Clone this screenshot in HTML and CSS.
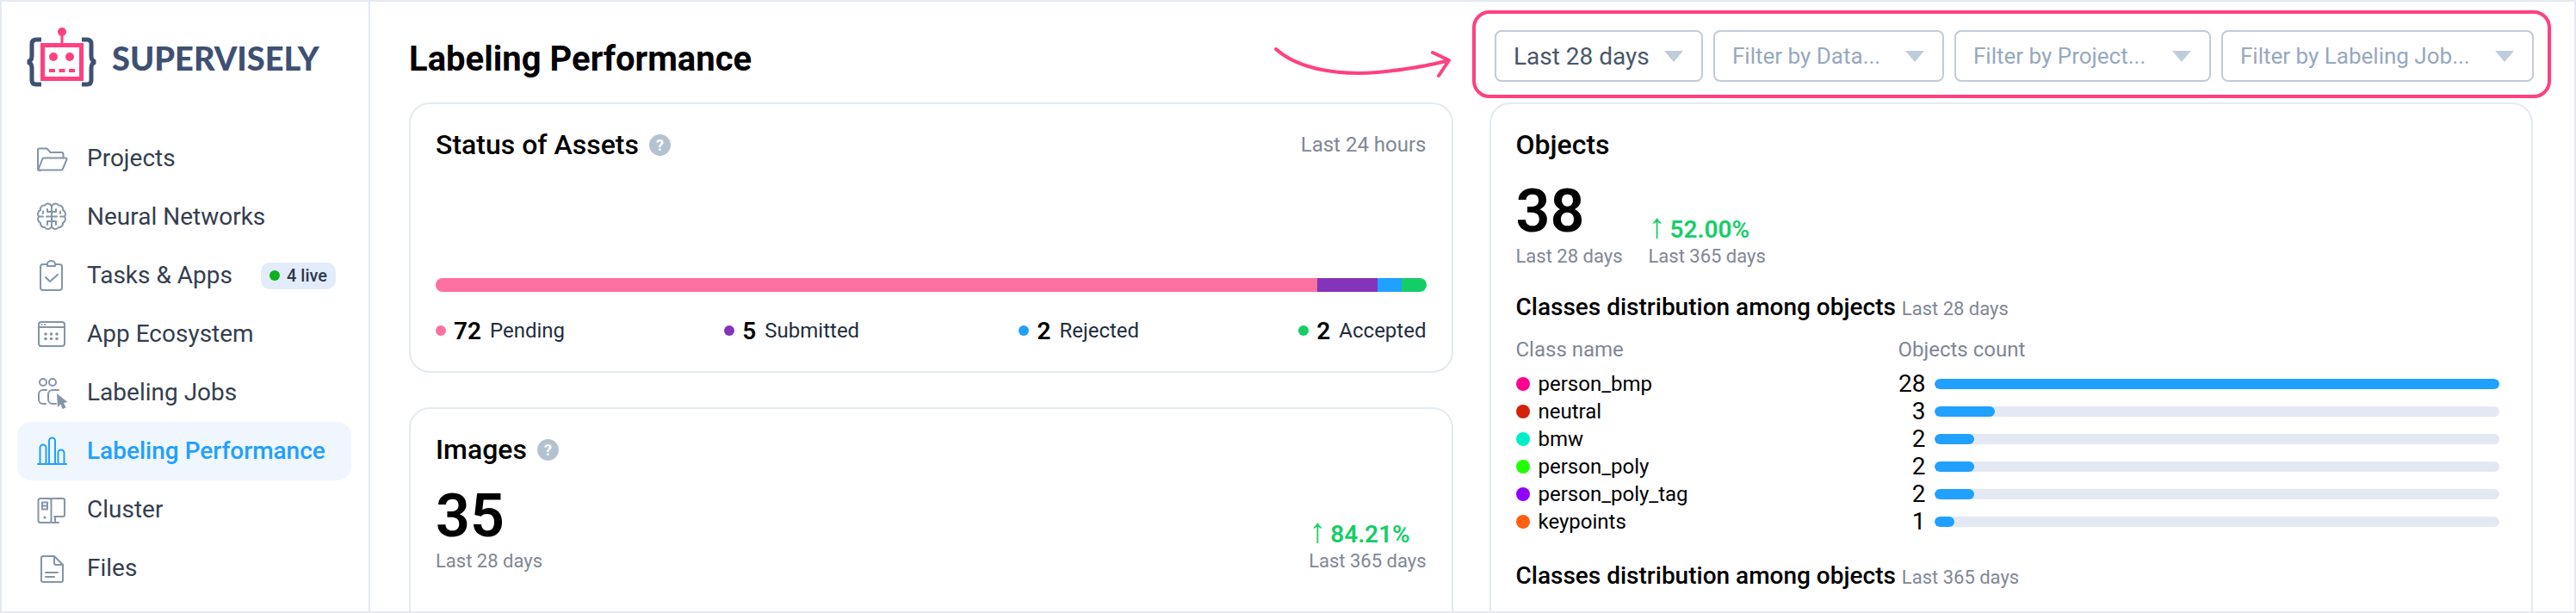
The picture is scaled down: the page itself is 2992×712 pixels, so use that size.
FILE: index.html

```html
<!DOCTYPE html>
<html lang="en">
<head>
<meta charset="UTF-8">
<meta name="viewport" content="width=device-width, initial-scale=1.0">
<title>Labeling Performance</title>
<link rel="stylesheet" href="styles.css">
</head>
<body>
<div class="app">

<aside class="sidebar">
<div class="logo">
<svg class="logo-mark" viewBox="29 28 86 74" width="86" height="74">
<g fill="none" stroke="#3f5073" stroke-width="5">
<path d="M48 44 h-6 q-5 0 -5 5 v14 q0 6 -5 7 q5 1 5 7 v14 q0 5 5 5 h6"/>
<path d="M95 44 h6 q5 0 5 5 v14 q0 6 5 7 q-5 1 -5 7 v14 q0 5 -5 5 h-6"/>
</g>
<g fill="none" stroke="#ff4081">
<rect x="49.5" y="50.5" width="45" height="39" stroke-width="5"/>
<path d="M72 38 V49" stroke-width="3"/>
<path d="M57 80 H87" stroke-width="4" stroke-dasharray="7 4.5"/>
</g>
<g fill="#ff4081">
<circle cx="72" cy="35" r="5"/>
<circle cx="62" cy="64" r="5"/>
<circle cx="81" cy="64" r="5"/>
</g>
</svg>
<span class="logo-text">SUPERVISELY</span>
</div>

<nav class="nav">
<a class="nav-item">
<svg class="nav-icon" viewBox="0 0 36 36"><path d="M4 32 H3 a2 2 0 0 1-2-2 V8 a1.5 1.5 0 0 1 1.5-1.5 h9 l4 4.5 h13 a2 2 0 0 1 2 2 v4.5"/><path d="M1.5 31 L6 19 a2 2 0 0 1 2-1.5 H33 a1.5 1.5 0 0 1 1.4 2 L30 30 a2 2 0 0 1-2 1.5 H3"/></svg>
Projects
</a>
<a class="nav-item">
<svg class="nav-icon" viewBox="0 0 36 36"><path d="M17 6 A4.5 4.5 0 0 0 9 4.5 A4.5 4.5 0 0 0 4 10 A5 5 0 0 0 2 17.5 A5 5 0 0 0 4 25 A4.5 4.5 0 0 0 9 30 A4.5 4.5 0 0 0 17 29 Z"/><path d="M17 6 A4.5 4.5 0 0 1 25 4.5 A4.5 4.5 0 0 1 30 10 A5 5 0 0 1 32 17.5 A5 5 0 0 1 30 25 A4.5 4.5 0 0 1 25 30 A4.5 4.5 0 0 1 17 29"/><path d="M17 12 H12 V9 M2.5 17.5 H7 M17 17.5 H11 M17 23 H12 V27 M7 11.5 V14 M22 12 V9 M17 12 H22 M31.5 17.5 H27 M17 17.5 H23 M17 23 H22 V27 M27 11.5 V14"/></svg>
Neural Networks
</a>
<a class="nav-item">
<svg class="nav-icon" viewBox="0 0 36 36"><path d="M12 5 H7 a3 3 0 0 0-3 3 V32 a3 3 0 0 0 3 3 H26 a3 3 0 0 0 3-3 V8 a3 3 0 0 0-3-3 H21"/><path d="M12 7 V4.5 a4.5 3.5 0 0 1 9 0 V7 Z"/><path d="M10 20 l5 5 l9 -8"/></svg>
Tasks &amp; Apps
<span class="live-badge"><i class="live-dot"></i>4 live</span>
</a>
<a class="nav-item">
<svg class="nav-icon" viewBox="0 0 36 36"><rect x="2" y="4" width="30" height="28" rx="3"/><path d="M2 10 H32"/><g class="icon-solid"><circle cx="5.5" cy="7" r="1"/><circle cx="9" cy="7" r="1"/><circle cx="10" cy="18" r="1.8"/><circle cx="16.5" cy="18" r="1.8"/><circle cx="23" cy="18" r="1.8"/><circle cx="10" cy="23.5" r="1.8"/><circle cx="16.5" cy="23.5" r="1.8"/><circle cx="23" cy="23.5" r="1.8"/></g></svg>
App Ecosystem
</a>
<a class="nav-item">
<svg class="nav-icon" viewBox="0 0 36 36"><circle cx="7" cy="6" r="4"/><circle cx="18" cy="6" r="4"/><path d="M11 15 H7 a5 5 0 0 0-5 5 v6 a5 5 0 0 0 5 5 h3"/><path d="M25 15 H18 a5 5 0 0 0-5 5 v6 a5 5 0 0 0 5 5 h4"/><path class="icon-solid" d="M23 19 L35.5 29 L31 30 L33.5 35.5 L29.5 37 L27.5 31.5 L24 35 Z"/></svg>
Labeling Jobs
</a>
<a class="nav-item nav-item-active">
<svg class="nav-icon" viewBox="0 0 36 36"><path d="M1 33 H34 M3.5 33 V14 a3.5 3.5 0 0 1 7 0 V33 M14 33 V6 a3.5 3.5 0 0 1 7 0 V33 M24.5 33 V20 a3.5 3.5 0 0 1 7 0 V33"/></svg>
Labeling Performance
</a>
<a class="nav-item">
<svg class="nav-icon" viewBox="0 0 36 36"><rect x="1.5" y="5" width="15" height="28" rx="2.5"/><rect x="6" y="9.5" width="6" height="8"/><path d="M6 13.5 H12"/><circle class="icon-solid" cx="9" cy="27" r="1.6"/><path d="M16.5 5 H30 a2 2 0 0 1 2 2 V24 a2 2 0 0 1-2 2 H20 M21 26 V33 M17 33 H25"/></svg>
Cluster
</a>
<a class="nav-item">
<svg class="nav-icon" viewBox="0 0 36 36"><path d="M7 4 H20 L30 14 V32 a2 2 0 0 1-2 2 H7 a2 2 0 0 1-2-2 V6 a2 2 0 0 1 2-2 Z"/><path d="M20 4 V12 a2 2 0 0 0 2 2 H30"/><path d="M10 23 H24 M10 28 H20"/></svg>
Files
</a>
</nav>
</aside>

<main class="main">
<header class="page-head">
<h1 class="page-title">Labeling Performance</h1>
<svg class="callout-arrow" viewBox="0 0 204 34" width="204" height="34">
<path d="M1 2 C25 24 70 33 119 29 C150 26 180 21 202 15 M183 6 L202 15 L190 33"/>
</svg>
<div class="filters">
<div class="select select-range">Last 28 days<i class="caret"></i></div>
<div class="select select-data placeholder">Filter by Data...<i class="caret"></i></div>
<div class="select select-project placeholder">Filter by Project...<i class="caret"></i></div>
<div class="select select-job placeholder">Filter by Labeling Job...<i class="caret"></i></div>
</div>
</header>

<div class="columns">
<div class="column">
<section class="card card-status">
<div class="card-head">
<h2 class="card-title">Status of Assets <span class="help">?</span></h2>
<span class="muted">Last 24 hours</span>
</div>
<div class="status-bar">
<div class="seg seg-pending"></div>
<div class="seg seg-submitted"></div>
<div class="seg seg-rejected"></div>
<div class="seg seg-accepted"></div>
</div>
<div class="legend">
<div class="legend-item"><i class="dot dot-pending"></i><b>72</b>Pending</div>
<div class="legend-item"><i class="dot dot-submitted"></i><b>5</b>Submitted</div>
<div class="legend-item"><i class="dot dot-rejected"></i><b>2</b>Rejected</div>
<div class="legend-item"><i class="dot dot-accepted"></i><b>2</b>Accepted</div>
</div>
</section>

<section class="card card-images">
<h2 class="card-title">Images <span class="help">?</span></h2>
<div class="stats stats-spread">
<div>
<div class="big-number">35</div>
<div class="stat-sub">Last 28 days</div>
</div>
<div>
<div class="delta"><span class="delta-arrow">↑</span>84.21%</div>
<div class="stat-sub">Last 365 days</div>
</div>
</div>
</section>
</div>

<div class="column">
<section class="card card-objects">
<h2 class="card-title">Objects</h2>
<div class="stats">
<div>
<div class="big-number">38</div>
<div class="stat-sub">Last 28 days</div>
</div>
<div>
<div class="delta"><span class="delta-arrow">↑</span>52.00%</div>
<div class="stat-sub">Last 365 days</div>
</div>
</div>

<h3 class="dist-title">Classes distribution among objects <span class="dist-range">Last 28 days</span></h3>
<div class="dist-head">
<span>Class name</span>
<span>Objects count</span>
</div>
<div class="dist-rows">
<div class="dist-row"><span class="class-name"><i class="class-dot" style="background:#ff0090"></i>person_bmp</span><span class="count">28</span><div class="track"><div class="fill" style="width:100%"></div></div></div>
<div class="dist-row"><span class="class-name"><i class="class-dot" style="background:#d4210a"></i>neutral</span><span class="count">3</span><div class="track"><div class="fill" style="width:10.7%"></div></div></div>
<div class="dist-row"><span class="class-name"><i class="class-dot" style="background:#00efc8"></i>bmw</span><span class="count">2</span><div class="track"><div class="fill" style="width:7.14%"></div></div></div>
<div class="dist-row"><span class="class-name"><i class="class-dot" style="background:#22ff00"></i>person_poly</span><span class="count">2</span><div class="track"><div class="fill" style="width:7.14%"></div></div></div>
<div class="dist-row"><span class="class-name"><i class="class-dot" style="background:#9000ff"></i>person_poly_tag</span><span class="count">2</span><div class="track"><div class="fill" style="width:7.14%"></div></div></div>
<div class="dist-row"><span class="class-name"><i class="class-dot" style="background:#ff6010"></i>keypoints</span><span class="count">1</span><div class="track"><div class="fill" style="width:3.57%"></div></div></div>
</div>

<h3 class="dist-title dist-title-next">Classes distribution among objects <span class="dist-range">Last 365 days</span></h3>
</section>
</div>
</div>
</main>

</div>
</body>
</html>
```

FILE: styles.css

```css
* {
box-sizing: border-box;
}

body {
margin: 0;
font-family: Roboto, "Liberation Sans", sans-serif;
color: #000;
background: #fff;
}

h1, h2, h3 {
margin: 0;
}

.app {
display: flex;
height: 100vh;
border: 2px solid #e4eaef;
overflow: hidden;
}

/* sidebar */
.sidebar {
width: 428px;
flex: none;
padding: 28px 20px 0 18px;
border-right: 2px solid #e4eaef;
}

.logo {
display: flex;
align-items: center;
height: 74px;
margin-left: 9px;
margin-bottom: 46px;
}

.logo-mark {
flex: none;
}

.logo-text {
margin-left: 15px;
font-family: Lato, sans-serif;
font-weight: 900;
font-size: 38px;
color: #3f5073;
}

.nav-item {
display: flex;
align-items: center;
height: 68px;
padding-left: 23px;
padding-bottom: 2px;
border-radius: 16px;
font-size: 28px;
color: #343e4f;
}

.nav-icon {
width: 36px;
height: 36px;
margin-top: 2px;
margin-right: 22px;
flex: none;
overflow: visible;
fill: none;
stroke: #8595a8;
stroke-width: 2;
stroke-linecap: round;
stroke-linejoin: round;
}

.icon-solid {
fill: #8595a8;
stroke: none;
}

.nav-item-active {
background: #f0f6fe;
color: #20a0ff;
font-weight: 500;
}

.nav-item-active .nav-icon {
stroke: #20a0ff;
}

.live-badge {
display: flex;
align-items: center;
height: 31px;
margin-top: 2px;
margin-left: 33px;
padding: 0 10px;
border-radius: 10px;
background: #e3ecfb;
font-size: 20px;
font-weight: 500;
color: #2b3a4a;
}

.live-dot {
width: 12px;
height: 12px;
margin-right: 8px;
border-radius: 50%;
background: #0cb01e;
}

/* main */
.main {
flex: 1;
min-width: 0;
padding: 10px 48px 0 45px;
}

.page-head {
display: flex;
align-items: center;
height: 102px;
margin-bottom: 5px;
}

.page-title {
margin-top: 10px;
font-size: 40px;
font-weight: 700;
}

.callout-arrow {
margin-left: auto;
margin-right: 25px;
margin-top: 18px;
flex: none;
overflow: visible;
fill: none;
stroke: #ff4081;
stroke-width: 4;
stroke-linecap: round;
stroke-linejoin: round;
}

.filters {
display: flex;
gap: 12px;
flex: none;
height: 102px;
margin-right: -21px;
padding: 19px 16px 15px 22px;
border: 4px solid #ff4081;
border-radius: 20px;
}

.select {
display: flex;
align-items: center;
justify-content: space-between;
height: 60px;
padding: 0 21px 0 20px;
border: 2px solid #c0ccda;
border-radius: 8px;
font-size: 28px;
color: #48576a;
white-space: nowrap;
}

.select-range { width: 242px; }
.select-data { width: 268px; }
.select-project { width: 298px; }
.select-job { width: 363px; }

.placeholder {
font-size: 26px;
color: #97a8be;
}

.caret {
width: 0;
height: 0;
border-left: 11px solid transparent;
border-right: 11px solid transparent;
border-top: 13px solid #c0ccda;
}

.columns {
display: flex;
gap: 42px;
}

.column {
flex: 1;
min-width: 0;
}

.card {
padding: 29px 29px 60px;
border: 2px solid #e4eaef;
border-radius: 24px;
}

.card-status {
height: 314px;
margin-bottom: 40px;
}

.card-images {
height: 320px;
}

.card-head {
display: flex;
justify-content: space-between;
align-items: center;
}

.card-title {
display: flex;
align-items: center;
height: 36px;
font-size: 32px;
font-weight: 500;
}

.help {
display: flex;
align-items: center;
justify-content: center;
width: 25px;
height: 25px;
margin-left: 12px;
border-radius: 50%;
background: #b4c2d0;
color: #fff;
font-size: 18px;
font-weight: 700;
}

.muted {
font-size: 24px;
font-weight: 400;
color: #7f8795;
}

.status-bar {
display: flex;
height: 16px;
margin-top: 137px;
border-radius: 8px;
overflow: hidden;
}

.seg-pending { width: 1024px; background: #fe6fa1; }
.seg-submitted { width: 70px; background: #8434b8; }
.seg-rejected { width: 28px; background: #20a0ff; }
.seg-accepted { flex: 1; background: #13ce66; }

.legend {
display: flex;
justify-content: space-between;
margin-top: 29px;
}

.legend-item {
display: flex;
align-items: center;
height: 32px;
font-size: 24px;
color: #1f2d3d;
}

.legend-item b {
margin-right: 10px;
font-size: 28px;
font-weight: 600;
color: #000;
}

.dot {
width: 12px;
height: 12px;
margin-right: 9px;
border-radius: 50%;
}

.dot-pending { background: #fe6fa1; }
.dot-submitted { background: #8434b8; }
.dot-rejected { background: #20a0ff; }
.dot-accepted { background: #13ce66; }

.stats {
display: flex;
align-items: flex-end;
gap: 30px;
margin-top: 24px;
}

.stats-spread {
justify-content: space-between;
}

.big-number {
font-size: 70px;
font-weight: 600;
line-height: 70px;
}

.stat-sub {
height: 32px;
margin-top: 2px;
font-size: 22px;
line-height: 32px;
color: #7f8795;
}

.delta {
font-size: 28px;
font-weight: 600;
line-height: 26px;
color: #13ce66;
}

.delta-arrow {
margin-right: 5px;
font-family: "Liberation Sans", sans-serif;
font-size: 40px;
font-weight: 400;
line-height: 0;
}

/* classes distribution */
.dist-title {
height: 34px;
margin-top: 26px;
font-size: 28px;
font-weight: 500;
line-height: 34px;
}

.dist-range {
font-size: 22px;
font-weight: 400;
color: #7f8795;
}

.dist-title-next {
margin-top: 31px;
}

.dist-head {
display: flex;
margin-top: 16px;
font-size: 24px;
line-height: 32px;
color: #7f8795;
}

.dist-head span:first-child {
width: 444px;
}

.dist-rows {
margin-top: 7px;
padding-right: 8px;
}

.dist-row {
display: grid;
grid-template-columns: 444px 32px 1fr;
align-items: center;
height: 32px;
font-size: 24px;
}

.class-name {
display: flex;
align-items: center;
}

.class-dot {
width: 16px;
height: 16px;
margin-right: 10px;
border-radius: 50%;
}

.count {
font-size: 28px;
text-align: right;
}

.track {
height: 12px;
margin-left: 10px;
border-radius: 6px;
background: #e4e8f3;
overflow: hidden;
}

.fill {
height: 100%;
border-radius: 6px;
background: #20a0ff;
}
```
